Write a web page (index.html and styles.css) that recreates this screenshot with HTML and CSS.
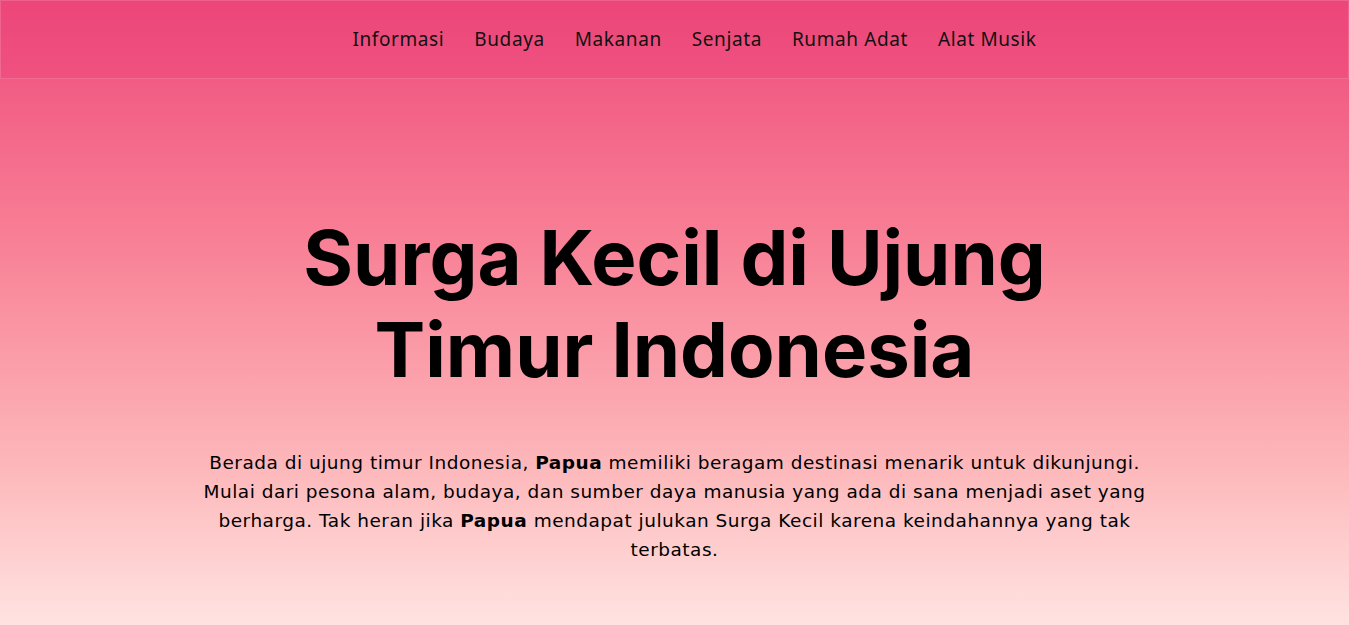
FILE: index.html
```html
<!DOCTYPE html>
<html lang="id">
<head>
<meta charset="utf-8">
<title>Papua</title>
<link rel="stylesheet" href="styles.css">
</head>
<body>
<div class="page">
  <nav class="navbar">
    <ul class="menu">
      <li><a href="#">Informasi</a></li>
      <li><a href="#">Budaya</a></li>
      <li><a href="#">Makanan</a></li>
      <li><a href="#">Senjata</a></li>
      <li><a href="#">Rumah Adat</a></li>
      <li><a href="#">Alat Musik</a></li>
    </ul>
  </nav>
  <section class="hero">
    <h1 class="title">Surga Kecil di Ujung Timur Indonesia</h1>
    <p class="lead">Berada di ujung timur Indonesia, <b>Papua</b> memiliki beragam destinasi menarik untuk dikunjungi.<br>Mulai dari pesona alam, budaya, dan sumber daya manusia yang ada di sana menjadi aset yang<br>berharga. Tak heran jika <b>Papua</b> mendapat julukan Surga Kecil karena keindahannya yang tak<br>terbatas.</p>
  </section>
</div>
</body>
</html>
```
FILE: styles.css
```css
* { box-sizing: border-box; }
html, body { margin: 0; padding: 0; }
body {
  font-family: "Noto Sans", sans-serif;
  color: #000;
}
.page {
  min-height: 625px;
  background: linear-gradient(180deg, #ee4a7b 0%, #f87f95 38%, #fdb8bb 75%, #ffe3e1 100%);
  display: flex;
  flex-direction: column;
}
.navbar {
  height: 79px;
  border: 1px solid rgba(255,255,255,0.15);
  background: rgba(236, 64, 120, 0.35);
  display: flex;
  align-items: center;
  justify-content: center;
}
.menu {
  list-style: none;
  margin: 0;
  padding: 0 0 2px;
  display: flex;
  gap: 30px;
  transform: translateX(20px);
}
.menu a {
  color: #111;
  text-decoration: none;
  font-size: 19px;
  letter-spacing: 0.6px;
}
.hero {
  display: flex;
  flex-direction: column;
  align-items: center;
  padding-top: 132px;
  text-align: center;
}
.title {
  font-family: Inter, sans-serif;
  font-weight: 700;
  font-size: 76px;
  line-height: 92px;
  letter-spacing: 0;
  width: 820px;
  margin: 0;
}
.lead {
  font-family: "DejaVu Sans", "Noto Sans", sans-serif;
  width: 1000px;
  margin: 53px 0 0;
  font-size: 18.5px;
  line-height: 29px;
  letter-spacing: 0.5px;
}
.lead b { font-weight: 700; }
```
